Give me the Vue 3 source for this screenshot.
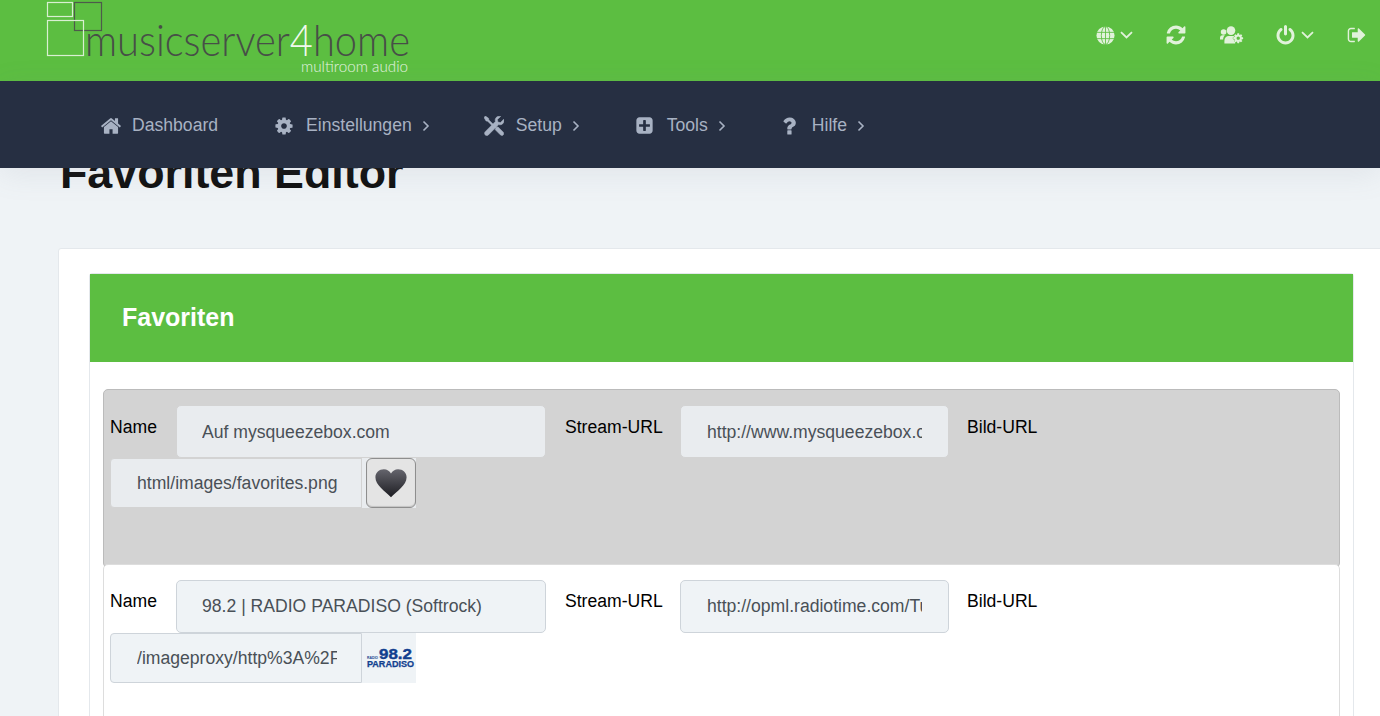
<template>
  <div class="page">
    <header class="topbar">
      <svg class="logo" width="380" height="81" viewBox="0 0 380 81">
        <rect x="17.5" y="2.5" width="25" height="14" fill="none" stroke="#d9efd2" stroke-width="1.2" />
        <rect x="44.5" y="2.5" width="27" height="28" fill="none" stroke="#4d5a4b" stroke-width="1.2" />
        <rect x="17.5" y="20.5" width="36" height="35" fill="none" stroke="#d9efd2" stroke-width="1.2" />
        <text x="55" y="56" font-family="Lato, sans-serif" font-weight="300" font-size="44" fill="#474f47" textLength="325" lengthAdjust="spacingAndGlyphs">musicserver<tspan fill="#f1f9ee">4</tspan>home</text>
        <text x="271" y="72" font-family="Lato, sans-serif" font-weight="300" font-size="15" fill="#e6f4e1" textLength="107" lengthAdjust="spacingAndGlyphs">multiroom audio</text>
      </svg>
      <div class="tools">
        <span class="tool globe">
          <svg width="19" height="19" viewBox="0 0 20 20"><circle cx="10" cy="10" r="9.5" fill="currentColor" /><g fill="none" stroke="#5cbe41" stroke-width=".9"><ellipse cx="10" cy="10" rx="4.4" ry="9.5" /><path d="M1 6.7h18M1 13.3h18M10 .5v19" /></g></svg>
          <svg class="chev" width="13" height="8" viewBox="0 0 13 8"><path d="M1 1.2l5.500 5.300L12 1.200" /></svg>
        </span>
        <span class="tool refresh">
          <svg width="22" height="22" viewBox="0 0 1792 1792"><path fill="currentColor" d="M1639 1056q0 5-1 7-64 268-268 434.5t-478 166.5q-146 0-282.5-55t-243.5-157l-129 129q-19 19-45 19t-45-19-19-45v-448q0-26 19-45t45-19h448q26 0 45 19t19 45-19 45l-137 137q71 66 161 102t187 36q134 0 250-65t186-179q11-17 53-117 8-23 30-23h192q13 0 22.5 9.5t9.5 22.5zm25-800v448q0 26-19 45t-45 19h-448q-26 0-45-19t-19-45 19-45l138-138q-148-137-349-137-134 0-250 65t-186 179q-11 17-53 117-8 23-30 23h-199q-13 0-22.5-9.5t-9.5-22.5v-7q65-268 270-434.5t480-166.5q146 0 284 55.5t245 156.5l130-129q19-19 45-19t45 19 19 45z" /></svg>
        </span>
        <span class="tool users">
          <svg width="24" height="18" viewBox="0 0 24 18" fill="currentColor">
            <circle cx="3.600" cy="6" r="2.800" />
            <circle cx="11" cy="4.600" r="4.300" />
            <path d="M0 13.500v-1.800C0 10 1.200 9.200 2.600 9.200h2.400C3.800 10.200 3.200 11.600 3.100 13.500zM4.400 17.500v-2.800c0-2.600 2-4.600 4.400-4.600h4.400c.5 0 1 .1 1.500.3-.2 1.600.2 3.400 1 4.700l-.6 2.400z" />
            <g transform="translate(12.500 6.500) scale(.00640)"><path stroke="#5cbe41" stroke-width="150" paint-order="stroke" d="M1152 896q0-106-75-181t-181-75-181 75-75 181 75 181 181 75 181-75 75-181zm512-109v222q0 12-8 23t-20 13l-185 28q-19 54-39 91 35 50 107 138 10 12 10 25t-9 23q-27 37-99 108t-94 71q-12 0-26-9l-138-108q-44 23-91 38-16 136-29 186-7 28-36 28h-222q-14 0-24.500-8.500t-11.500-21.500l-28-184q-49-16-90-37l-141 107q-10 9-25 9-14 0-25-11-126-114-165-168-7-10-7-23 0-12 8-23 15-21 51-66.500t54-70.500q-27-50-41-99l-183-27q-13-2-21-12.500t-8-23.500v-222q0-12 8-23t19-13l186-28q14-46 39-92-40-57-107-138-10-12-10-24 0-10 9-23 26-36 98.500-107.500t94.500-71.500q13 0 26 10l138 107q44-23 91-38 16-136 29-186 7-28 36-28h222q14 0 24.500 8.500t11.500 21.500l28 184q49 16 90 37l142-107q9-9 24-9 13 0 25 10 129 119 165 170 7 8 7 22 0 12-8 23-15 21-51 66.500t-54 70.500q26 50 41 98l183 28q13 2 21 12.500t8 23.500z" /></g>
          </svg>
        </span>
        <span class="tool power">
          <svg width="21" height="21" viewBox="0 0 1792 1792"><path fill="currentColor" d="M1664 896q0 156-61 298t-164 245-245 164-298 61-298-61-245-164-164-245-61-298q0-182 80.500-343t226.500-270q43-32 95.500-25t83.500 50q32 42 24.500 94.500t-49.500 84.500q-98 74-151.500 181t-53.500 228q0 104 40.500 198.500t109.500 163.500 163.500 109.500 198.500 40.500 198.500-40.500 163.500-109.500 109.500-163.500 40.500-198.500q0-121-53.500-228t-151.500-181q-42-32-49.500-84.500t24.500-94.500q31-43 84-50t95 25q146 109 226.500 270t80.500 343zm-640-768v640q0 52-38 90t-90 38-90-38-38-90v-640q0-52 38-90t90-38 90 38 38 90z" /></svg>
          <svg class="chev" width="13" height="8" viewBox="0 0 13 8"><path d="M1 1.200l5.500 5.300L12 1.200" /></svg>
        </span>
        <span class="tool signout">
          <svg width="20" height="20" viewBox="0 0 1792 1792"><path fill="currentColor" d="M704 1440q0 4 1 20t.5 26.500-3 23.500-10 19.500-20.500 6.500h-320q-119 0-203.500-84.500t-84.500-203.500v-704q0-119 84.500-203.500t203.500-84.500h320q13 0 22.500 9.500t9.500 22.500q0 4 1 20t.5 26.500-3 23.500-10 19.500-20.500 6.500h-320q-66 0-113 47t-47 113v704q0 66 47 113t113 47h312l11.500 1 11.500 3 8 5.500 7 9 2 13.500zm928-544q0 26-19 45l-544 544q-19 19-45 19t-45-19-19-45v-288h-448q-26 0-45-19t-19-45v-384q0-26 19-45t45-19h448v-288q0-26 19-45t45-19 45 19l544 544q19 19 19 45z" /></svg>
        </span>
      </div>
    </header>

    <nav class="mainnav">
      <a v-for="item in menu" :key="item.label" class="navitem" :style="{ marginRight: item.gap + 'px' }">
        <span class="navicon" :class="'ni-' + item.icon">
          <svg v-if="item.icon === 'home'" width="22" height="22" viewBox="0 0 1792 1792"><path fill="currentColor" d="M1472 992v480q0 26-19 45t-45 19h-384v-384h-256v384h-384q-26 0-45-19t-19-45v-480q0-1 .5-3t.5-3l575-474 575 474q1 2 1 6zm223-69l-62 74q-8 9-21 11h-3q-13 0-21-7l-692-577-692 577q-12 8-24 7-13-2-21-11l-62-74q-8-10-7-23.500t11-21.500l719-599q32-26 76-26t76 26l244 204v-195q0-14 9-23t23-9h192q14 0 23 9t9 23v408l219 182q10 8 11 21.500t-7 23.500z" /></svg>
          <svg v-else-if="item.icon === 'cog'" width="20" height="20" viewBox="0 0 1792 1792"><path fill="currentColor" d="M1152 896q0-106-75-181t-181-75-181 75-75 181 75 181 181 75 181-75 75-181zm512-109v222q0 12-8 23t-20 13l-185 28q-19 54-39 91 35 50 107 138 10 12 10 25t-9 23q-27 37-99 108t-94 71q-12 0-26-9l-138-108q-44 23-91 38-16 136-29 186-7 28-36 28h-222q-14 0-24.500-8.500t-11.500-21.500l-28-184q-49-16-90-37l-141 107q-10 9-25 9-14 0-25-11-126-114-165-168-7-10-7-23 0-12 8-23 15-21 51-66.500t54-70.500q-27-50-41-99l-183-27q-13-2-21-12.500t-8-23.500v-222q0-12 8-23t19-13l186-28q14-46 39-92-40-57-107-138-10-12-10-24 0-10 9-23 26-36 98.500-107.500t94.500-71.500q13 0 26 10l138 107q44-23 91-38 16-136 29-186 7-28 36-28h222q14 0 24.500 8.500t11.500 21.500l28 184q49 16 90 37l142-107q9-9 24-9 13 0 25 10 129 119 165 170 7 8 7 22 0 12-8 23-15 21-51 66.500t-54 70.500q26 50 41 98l183 28q13 2 21 12.500t8 23.500z" /></svg>
          <svg v-else-if="item.icon === 'tools'" width="20" height="20" viewBox="0 0 20 20" fill="currentColor" stroke="currentColor" stroke-width=".5">
            <path d="M1.400 0L4.600 2.300 4.900 3.900 10.500 9.500 9.200 10.800 3.600 5.200 2 4.900 0 1.500z" />
            <path d="M10.900 11.500l1-1 .9.900 1.100-.6 5.200 5.200c.9.900.9 2.100.1 2.900s-2 .8-2.900-.1l-5.200-5.200.6-1.100z" />
            <path d="M19.700 3.200c.6 1.800.1 3.600-1.200 4.700-1.100.9-2.600 1.100-3.800.7L4.400 18.900c-.9.900-2.300.9-3.200 0s-.9-2.300 0-3.200L11.400 5.400c-.5-1.300-.2-2.800.8-3.900C13.300.3 15.100-.2 16.700.4l-3.300 3.100.5 2.600 2.600.5z" />
          </svg>
          <svg v-else-if="item.icon === 'plus'" width="19" height="19" viewBox="0 0 1792 1792"><path fill="currentColor" d="M1408 960v-128q0-26-19-45t-45-19h-320v-320q0-26-19-45t-45-19h-128q-26 0-45 19t-19 45v320h-320q-26 0-45 19t-19 45v128q0 26 19 45t45 19h320v320q0 26 19 45t45 19h128q26 0 45-19t19-45v-320h320q26 0 45-19t19-45zm256-544v960q0 119-84.500 203.500t-203.500 84.500h-960q-119 0-203.500-84.500t-84.500-203.500v-960q0-119 84.500-203.500t203.500-84.500h960q119 0 203.500 84.500t84.500 203.500z" /></svg>
          <svg v-else width="24" height="24" viewBox="0 0 1792 1792"><path fill="currentColor" d="M1088 1256v240q0 16-12 28t-28 12h-240q-16 0-28-12t-12-28v-240q0-16 12-28t28-12h240q16 0 28 12t12 28zm316-600q0 54-15.500 101t-35 76.500-55 59.500-57.500 43.500-61 35.500q-41 23-68.500 65t-27.500 67q0 17-12 32.500t-28 15.500h-240q-15 0-25.500-18.500t-10.500-37.500v-45q0-83 65-156.500t143-108.500q59-27 84-56t25-76q0-42-46.500-74t-107.500-32q-65 0-108 29-35 25-107 115-13 16-31 16-12 0-25-8l-164-125q-13-10-15.500-25t5.500-28q160-266 464-266 80 0 161 31t146 83 106 127.500 41 158.500z" /></svg>
        </span>
        <span>{{ item.label }}</span>
        <svg v-if="item.sub" class="navchev" width="8" height="12" viewBox="0 0 8 12"><path d="M1.500 1.500L6 6l-4.500 4.500" /></svg>
      </a>
    </nav>

    <main class="content">
      <h1>Favoriten Editor</h1>
      <section class="card">
        <div class="panel">
          <div class="panel-head">Favoriten</div>
          <div class="panel-body">
            <div v-for="(fav, i) in favorites" :key="i" class="fav" :class="{ selected: fav.selected }">
              <div class="line">
                <label class="lbl-name">Name</label>
                <input class="in-name" type="text" :value="fav.name" />
                <label class="lbl-url">Stream-URL</label>
                <input class="in-url" type="text" :value="fav.url" />
                <label class="lbl-img">Bild-URL</label>
              </div>
              <div class="line">
                <input class="in-img" type="text" :value="fav.img" />
                <div class="thumb">
                  <button v-if="fav.selected" class="heart" type="button">
                    <svg width="34" height="32" viewBox="0 0 36 32">
                      <defs>
                        <linearGradient id="heartfill" x1="0" y1="0" x2="0" y2="1">
                          <stop offset="0" stop-color="#65656d" />
                          <stop offset="1" stop-color="#1d1d22" />
                        </linearGradient>
                      </defs>
                      <path fill="url(#heartfill)" d="M18 31C12 25 1.500 18.500 1.500 10 1.500 5 5.500 1.500 10.500 1.500 13.700 1.500 16.500 3.200 18 6 19.500 3.200 22.300 1.500 25.500 1.500 30.500 1.500 34.500 5 34.500 10 34.500 18.500 24 25 18 31z" />
                    </svg>
                  </button>
                  <svg v-else width="54" height="50" viewBox="0 0 54 50">
                    <text x="17" y="26" font-family="Liberation Sans, sans-serif" font-weight="700" font-size="15" fill="#123f8f" stroke="#123f8f" stroke-width=".4" textLength="33" lengthAdjust="spacingAndGlyphs">98.2</text>
                    <text x="5" y="26" font-family="Liberation Sans, sans-serif" font-weight="700" font-size="3.500" fill="#123f8f" textLength="11" lengthAdjust="spacingAndGlyphs">RADIO</text>
                    <text x="5" y="34" font-family="Liberation Sans, sans-serif" font-weight="700" font-size="8.500" fill="#123f8f" stroke="#123f8f" stroke-width=".25" textLength="47" lengthAdjust="spacingAndGlyphs">PARADISO</text>
                  </svg>
                </div>
              </div>
            </div>
          </div>
        </div>
      </section>
    </main>
  </div>
</template>

<script setup>
const menu = [
  { label: "Dashboard", icon: "home", sub: false, gap: 56 },
  { label: "Einstellungen", icon: "cog", sub: true, gap: 54 },
  { label: "Setup", icon: "tools", sub: true, gap: 55 },
  { label: "Tools", icon: "plus", sub: true, gap: 51 },
  { label: "Hilfe", icon: "help", sub: true, gap: 0 },
];

const favorites = [
  {
    name: "Auf mysqueezebox.com",
    url: "http://www.mysqueezebox.com/",
    img: "html/images/favorites.png",
    selected: true,
  },
  {
    name: "98.2 | RADIO PARADISO (Softrock)",
    url: "http://opml.radiotime.com/Tune.ashx",
    img: "/imageproxy/http%3A%2F%2Fcdn",
    selected: false,
  },
];
</script>

<style>
html, body { margin: 0; background: #eff3f6; overflow: hidden; }
</style>

<style scoped>
.page{height:716px;overflow:hidden;background:#eff3f6;font-family:"Liberation Sans",Arial,sans-serif}
.topbar{height:81px;background:#5cbe41;display:flex;justify-content:space-between;padding-left:30px}
.logo{display:block}
.tools{display:flex;align-items:center;color:#e1f2da;height:70px}
.tool{display:flex;align-items:center;gap:5px}
.chev{fill:none;stroke:currentColor;stroke-width:1.8}
.globe{margin-right:32px}
.refresh{margin-right:33px}
.users{margin-right:31px}
.power{margin-right:33px}
.signout{margin-right:13px}
.mainnav{position:relative;z-index:2;height:87px;box-sizing:border-box;padding-top:2px;background:#262f42;display:flex;align-items:center;padding-left:100px;color:#a8b2c3;font-size:17.6px;box-shadow:0 6px 30px rgba(120,130,150,.12)}
.navitem{display:flex;align-items:center}
.navicon{display:flex;align-items:center;width:32px;flex:none}
.ni-help{width:35px}
.navchev{margin-left:10px;fill:none;stroke:currentColor;stroke-width:1.6}
.content{padding-left:58px}
h1{margin:-22px 0 48px 2px;font-size:44.8px;line-height:1.2;font-weight:700;color:#111}
.card{width:1326px;background:#fff;border:1px solid #e4e8ec;border-radius:3px;padding:24px 30px;box-sizing:border-box}
.panel{width:1265px;box-sizing:border-box;border:1px solid #e4e8ec;border-radius:3px;background:#fff}
.panel-head{height:88px;background:#5cbe41;color:#fff;font-size:25px;font-weight:700;display:flex;align-items:center;padding-left:32px}
.panel-body{padding:27px 13px 0}
.fav{height:175px;box-sizing:border-box;border:1px solid #ddd;border-radius:5px;padding:15px 6px 0;background:#fff}
.fav.selected{height:179px;margin-bottom:-4px;background:#d3d3d3;border-color:#bbb}
.line{display:flex;align-items:flex-start;font-size:17.6px;color:#000}
.line label{padding-top:11px;line-height:21px}
.selected .line label{padding-top:12px}
.lbl-name{width:66px}
.lbl-url{width:115px;margin-left:19px}
.lbl-img{margin-left:18px}
input{box-sizing:border-box;height:53px;border:1px solid #ced4da;border-radius:5px;background:#eff3f6;padding:0 26px;font:17.6px "Liberation Sans",Arial,sans-serif;color:#495057;outline:none}
.selected input{background:#e9ecef;border-color:#d3d3d3;padding-top:2px}
.in-name{width:370px;padding-left:25px}
.in-url{width:269px}
.in-img,.selected .in-img{width:252px;height:50px;padding-top:2px;padding-right:24px;border-radius:4px 0 0 4px}
.thumb{width:54px;height:50px;background:#eff3f6;display:flex;justify-content:flex-end}
.selected .thumb{background:#e9ecef}
.heart{width:50px;height:50px;box-sizing:border-box;padding:0;display:flex;align-items:center;justify-content:center;background:#e4e4e4;border:1px solid #8e8e8e;border-radius:6px;box-shadow:inset 0 -1px 1px rgba(0,0,0,.15)}
</style>
